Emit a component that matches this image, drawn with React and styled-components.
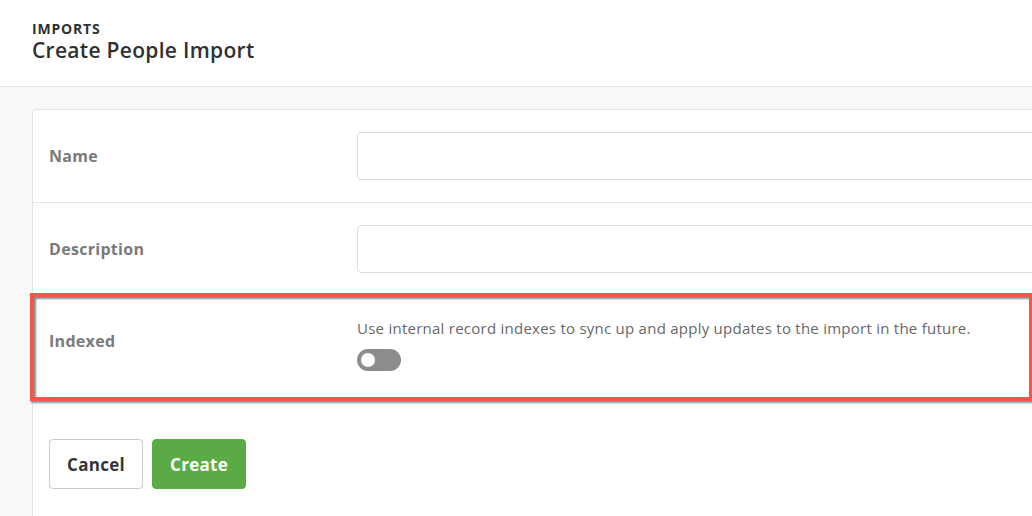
import React, { useState } from "react";
import styled, { createGlobalStyle } from "styled-components";

const GlobalStyle = createGlobalStyle`
  html, body {
    margin: 0;
    padding: 0;
    background: #f9f9f9;
    font-family: "Open Sans", "Liberation Sans", sans-serif;
    overflow: hidden;
  }
`;

export default function App() {
  const [indexed, setIndexed] = useState(false);

  return (
    <>
      <GlobalStyle />
      <StyledHeader>
        <StyledEyebrow>IMPORTS</StyledEyebrow>
        <StyledTitle>Create People Import</StyledTitle>
      </StyledHeader>
      <StyledMain>
        <StyledCard>
          <StyledRow>
            <StyledLabel>Name</StyledLabel>
            <StyledInput type="text" />
          </StyledRow>
          <StyledRow>
            <StyledLabel>Description</StyledLabel>
            <StyledInput type="text" />
          </StyledRow>
          <StyledRow $highlighted>
            <StyledLabel $raised>Indexed</StyledLabel>
            <StyledField>
              <StyledHelp>
                Use internal record indexes to sync up and apply updates to the
                import in the future.
              </StyledHelp>
              <StyledToggle
                type="button"
                $on={indexed}
                onClick={() => setIndexed(!indexed)}
              />
            </StyledField>
          </StyledRow>
          <StyledActions>
            <StyledButton>Cancel</StyledButton>
            <StyledButton $primary>Create</StyledButton>
          </StyledActions>
        </StyledCard>
      </StyledMain>
    </>
  );
}

const StyledHeader = styled.header`
  background: #ffffff;
  border-bottom: 1px solid #e2e2e2;
  height: 87px;
  box-sizing: border-box;
  padding: 20px 32px 0;
  color: #2f3133;
`;

const StyledEyebrow = styled.div`
  font-size: 14px;
  font-weight: 700;
  letter-spacing: 0.8px;
  line-height: 18px;
`;

const StyledTitle = styled.h1`
  margin: 0;
  font-size: 21px;
  font-weight: 600;
  letter-spacing: 0.3px;
  line-height: 25px;
`;

const StyledMain = styled.main`
  padding: 22px 0 0 32px;
`;

// wider than the window, like the screenshot where the card runs off the edge
const StyledCard = styled.section`
  width: 1080px;
  min-height: 420px;
  background: #ffffff;
  border: 1px solid #e3e3e3;
  border-radius: 3px;
`;

const StyledRow = styled.div`
  position: relative;
  display: grid;
  grid-template-columns: 308px 1fr;
  align-items: center;
  padding: ${({ $highlighted }) => ($highlighted ? "22px 16px 27px" : "22px 16px")};
  border-bottom: 1px solid #e3e3e3;

  &::after {
    content: "";
    display: ${({ $highlighted }) => ($highlighted ? "block" : "none")};
    position: absolute;
    left: -3px;
    right: 80px;
    top: -3px;
    bottom: -3px;
    border: 4px solid #f2574a;
    box-shadow: inset 2px 2px 2px rgba(0, 0, 0, 0.45),
      1px 2px 2px rgba(0, 0, 0, 0.45);
    pointer-events: none;
  }
`;

const StyledLabel = styled.label`
  font-size: 16px;
  font-weight: 700;
  letter-spacing: 0.3px;
  color: #7a7a7a;
  margin-bottom: ${({ $raised }) => ($raised ? "8px" : "0")};
`;

const StyledInput = styled.input`
  height: 48px;
  box-sizing: border-box;
  border: 1px solid #dcdcdc;
  border-radius: 4px;
  outline: none;
  padding: 0 12px;
  font: inherit;
`;

const StyledField = styled.div`
  display: flex;
  flex-direction: column;
  align-items: flex-start;
  gap: 11px;
`;

const StyledHelp = styled.p`
  margin: 0;
  font-size: 15px;
  letter-spacing: 0.25px;
  line-height: 20px;
  color: #686868;
`;

const StyledToggle = styled.button`
  position: relative;
  width: 44px;
  height: 22px;
  border: none;
  border-radius: 11px;
  padding: 0;
  cursor: pointer;
  background: ${({ $on }) => ($on ? "#5aab45" : "#8c8c8c")};

  &::before {
    content: "";
    position: absolute;
    top: 4px;
    left: ${({ $on }) => ($on ? "26px" : "4px")};
    width: 14px;
    height: 14px;
    border-radius: 50%;
    background: #ffffff;
  }
`;

const StyledActions = styled.div`
  display: flex;
  gap: 9px;
  padding: 40px 16px;
`;

const StyledButton = styled.button`
  height: 50px;
  padding: 0 17px;
  border-radius: 4px;
  font-family: inherit;
  font-size: 17px;
  font-weight: 700;
  letter-spacing: 0.3px;
  cursor: pointer;
  border: 1px solid ${({ $primary }) => ($primary ? "#5aab45" : "#c9c9c9")};
  background: ${({ $primary }) => ($primary ? "#5aab45" : "#ffffff")};
  color: ${({ $primary }) => ($primary ? "#ffffff" : "#33363d")};
`;
